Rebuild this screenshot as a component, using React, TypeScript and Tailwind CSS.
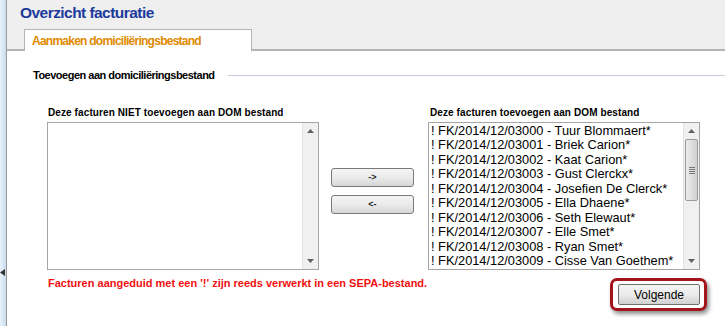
import React from "react";

const items = [
  "! FK/2014/12/03000 - Tuur Blommaert*",
  "! FK/2014/12/03001 - Briek Carion*",
  "! FK/2014/12/03002 - Kaat Carion*",
  "! FK/2014/12/03003 - Gust Clerckx*",
  "! FK/2014/12/03004 - Josefien De Clerck*",
  "! FK/2014/12/03005 - Ella Dhaene*",
  "! FK/2014/12/03006 - Seth Elewaut*",
  "! FK/2014/12/03007 - Elle Smet*",
  "! FK/2014/12/03008 - Ryan Smet*",
  "! FK/2014/12/03009 - Cisse Van Goethem*",
];

function Scrollbar({ thumb }: { thumb: boolean }) {
  return (
    <div className="w-[16px] h-full shrink-0 bg-[#f0f0f0] border-l border-[#e3e3e3] flex flex-col items-center">
      <div className="h-[16px] w-full flex items-center justify-center">
        <svg width="7" height="4" viewBox="0 0 7 4"><path d="M0 4 L3.5 0 L7 4 Z" fill="#606060" /></svg>
      </div>
      <div className="flex-1 w-full px-[1px]">
        {thumb && (
          <div className="h-[62px] w-full rounded-[2px] border border-[#9a9a9a] bg-gradient-to-r from-[#ececec] via-[#dedede] to-[#d0d0d0] flex flex-col items-center justify-center gap-[1px]">
            <div className="w-[6px] h-[1px] bg-[#777]" />
            <div className="w-[6px] h-[1px] bg-[#777]" />
            <div className="w-[6px] h-[1px] bg-[#777]" />
            <div className="w-[6px] h-[1px] bg-[#777]" />
          </div>
        )}
      </div>
      <div className="h-[16px] w-full flex items-center justify-center">
        <svg width="7" height="4" viewBox="0 0 7 4"><path d="M0 0 L3.5 4 L7 0 Z" fill="#606060" /></svg>
      </div>
    </div>
  );
}

function SmallButton({ label }: { label: string }) {
  return (
    <div className="w-[83px] h-[19px] rounded-[3px] border border-[#7a7a7a] bg-gradient-to-b from-[#f4f4f4] via-[#ebebeb] to-[#d6d6d6] flex items-center justify-center text-[9px] font-bold text-[#222] leading-none">
      {label}
    </div>
  );
}

export default function App() {
  return (
    <div
      className="w-[725px] h-[326px] flex bg-white overflow-hidden"
      style={{ fontFamily: '"Liberation Sans", Arial, sans-serif' }}
    >
      <div className="w-[7px] h-full shrink-0 bg-gradient-to-r from-[#eaf2fb] to-[#c9dcf0] border-r border-[#9a9a9a] flex items-end pb-[50px]">
        <svg width="5" height="7" viewBox="0 0 5 7"><path d="M5 0 L0 3.5 L5 7 Z" fill="#333" /></svg>
      </div>
      <div className="flex-1 flex flex-col">
        <div className="h-[51px] bg-[#efefef] border-b-2 border-[#b4b4b4] flex flex-col">
          <div className="pl-[13px] pt-[4px] h-[29px] text-[15.5px] tracking-[-0.55px] font-bold text-[#1c3a9c] leading-[18px]">
            Overzicht facturatie
          </div>
          <div className="flex-1 flex items-end pl-[17px]">
            <div className="w-[228px] h-[22px] bg-white border border-b-0 border-[#b4b4b4] -mb-[2px] pl-[7px] pt-[4px] text-[12px] tracking-[-0.75px] font-bold text-[#e08a00] leading-[14px]">
              Aanmaken domiciliëringsbestand
            </div>
          </div>
        </div>
        <div className="flex items-center pl-[26px] pt-[17px]">
          <div className="text-[11px] tracking-[-0.5px] font-bold text-black leading-[14px]">Toevoegen aan domiciliëringsbestand</div>
          <div className="flex-1 h-[1px] bg-[#c5cede] ml-[13px]" />
        </div>
        <div className="pl-[40px] pt-[25px] w-[700px]">
          <div className="flex items-start w-[653px]">
            <div className="w-[272px] flex flex-col">
              <div className="text-[10px] tracking-[0.1px] font-bold text-black leading-[12px] pl-[1px] whitespace-nowrap">
                Deze facturen NIET toevoegen aan DOM bestand
              </div>
              <div className="mt-[3px] w-[272px] h-[148px] border border-[#a5a5a5] bg-white flex justify-end">
                <Scrollbar thumb={false} />
              </div>
            </div>
            <div className="flex flex-col gap-[8px] pt-[61px] ml-[12px]">
              <SmallButton label="->" />
              <SmallButton label="<-" />
            </div>
            <div className="w-[272px] flex flex-col ml-[14px]">
              <div className="text-[10px] tracking-[0.1px] font-bold text-black leading-[12px] pl-[2px] whitespace-nowrap">
                Deze facturen toevoegen aan DOM bestand
              </div>
              <div className="mt-[3px] w-[272px] h-[148px] border border-[#a5a5a5] bg-white flex">
                <div className="flex-1 pl-[2px] pt-[1px] text-[12.8px] leading-[14.45px] text-[#000000] whitespace-nowrap overflow-hidden">
                  {items.map((t) => (
                    <div key={t} className="text-[#000000]">{t}</div>
                  ))}
                </div>
                <Scrollbar thumb={true} />
              </div>
            </div>
          </div>
          <div className="flex items-start w-[660px]">
            <div className="mt-[7px] pl-[1px] text-[11px] font-bold text-[#f01010] leading-[13px] whitespace-nowrap">
              Facturen aangeduid met een '!' zijn reeds verwerkt in een SEPA-bestand.
            </div>
            <div className="flex-1" />
            <div className="mt-[8px] rounded-[7px] border-[3px] border-[#a3141c] pl-[5px] pr-[4px] py-[3px] bg-white shadow-[2px_3px_4px_rgba(0,0,0,0.45)]">
              <div className="w-[82px] h-[21px] rounded-[2px] border border-[#707070] bg-gradient-to-b from-[#f4f4f4] via-[#ebebeb] to-[#d0d0d0] flex items-center justify-center text-[12px] text-black leading-none">
                Volgende
              </div>
            </div>
          </div>
        </div>
      </div>
    </div>
  );
}
